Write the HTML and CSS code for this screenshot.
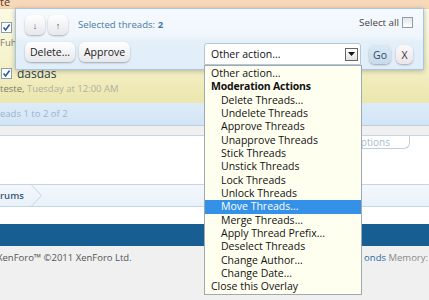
FILE: index.html
```html
<!DOCTYPE html>
<html lang="en">
<head>
    <meta charset="UTF-8">
    <meta name="viewport" content="width=device-width, initial-scale=1.0">
    <title>Inline Moderation</title>
    <link rel="stylesheet" href="styles.css">
</head>
<body>
    <div class="page">
        <div class="section-head">te</div>
        <div class="threads">
            <div class="thread">
                <div class="thread-title">
                    <span class="check checked"><svg width="11" height="11" viewBox="0 0 11 11"><path d="M2.5 5.5 L4.6 8 L8.6 2.6" fill="none" stroke="#2a5ca6" stroke-width="1.6"/></svg></span>
                    <span class="title">Teste</span>
                </div>
                <div class="thread-meta"><span class="author">Fuhrer,</span> Tuesday at 12:00 AM</div>
            </div>
            <div class="thread">
                <div class="thread-title">
                    <span class="check checked"><svg width="11" height="11" viewBox="0 0 11 11"><path d="M2.5 5.5 L4.6 8 L8.6 2.6" fill="none" stroke="#2a5ca6" stroke-width="1.6"/></svg></span>
                    <span class="title">dasdas</span>
                </div>
                <div class="thread-meta"><span class="author">teste,</span> Tuesday at 12:00 AM</div>
            </div>
        </div>
        <div class="page-nav">eads 1 to 2 of 2</div>
        <div class="options-area">
            <span class="options-tab">Options</span>
        </div>
        <div class="breadcrumb">
            <span class="crumb">rums</span>
            <svg class="chevron" width="12" height="21" viewBox="0 0 12 21"><polyline points="0.5,0 10.5,10.5 0.5,21" fill="none" stroke="#c3d5e4" stroke-width="1"/></svg>
        </div>
        <div class="footer-spacer"></div>
        <div class="footer-bar"></div>
        <div class="copyright">
            <span class="legal">XenForo&trade; &copy;2011 XenForo Ltd.</span>
            <span class="stats"><span class="link">onds</span> Memory:</span>
        </div>
    </div>

    <div class="modbar">
        <div class="modbar-row">
            <button class="btn arrow">&darr;</button>
            <button class="btn arrow">&uarr;</button>
            <span class="selected">Selected threads: <b>2</b></span>
            <span class="select-all">Select all <span class="check"></span></span>
        </div>
        <div class="modbar-row">
            <button class="btn">Delete...</button>
            <button class="btn">Approve</button>
            <div class="action-select">
                <span>Other action...</span>
                <span class="arrow-box"><svg width="7" height="4" viewBox="0 0 7 4"><polygon points="0,0 7,0 3.5,4" fill="#111"/></svg></span>
                <ul class="action-menu">
                    <li>Other action...</li>
                    <li class="group">Moderation Actions</li>
                    <li class="sub">Delete Threads...</li>
                    <li class="sub">Undelete Threads</li>
                    <li class="sub">Approve Threads</li>
                    <li class="sub">Unapprove Threads</li>
                    <li class="sub">Stick Threads</li>
                    <li class="sub">Unstick Threads</li>
                    <li class="sub">Lock Threads</li>
                    <li class="sub">Unlock Threads</li>
                    <li class="sub active">Move Threads...</li>
                    <li class="sub">Merge Threads...</li>
                    <li class="sub">Apply Thread Prefix...</li>
                    <li class="sub">Deselect Threads</li>
                    <li class="sub">Change Author...</li>
                    <li class="sub">Change Date...</li>
                    <li>Close this Overlay</li>
                </ul>
            </div>
            <button class="btn go">Go</button>
            <button class="btn close">X</button>
        </div>
    </div>
</body>
</html>
```

FILE: styles.css
```css
body {
    margin: 0;
    width: 429px;
    height: 300px;
    overflow: hidden;
    font-family: "Open Sans", "Noto Sans", sans-serif;
    background-color: #f0f0f0;
    position: relative;
}

.page {
    display: flex;
    flex-direction: column;
}

.section-head {
    height: 9px;
    background-color: #f7d9ba;
    color: #5a3a1c;
    font-size: 11px;
    line-height: 4px;
    overflow: hidden;
    border-bottom: 1px solid #eed2ae;
    box-sizing: border-box;
}

.threads {
    height: 94px;
    overflow: hidden;
    padding-top: 10px;
    box-sizing: border-box;
    background: linear-gradient(#fcfae4, #f6f3cf 50%, #ebe6ac);
}

.thread {
    height: 46px;
}

.thread-title {
    display: flex;
    align-items: center;
    gap: 5px;
    height: 17px;
    padding-left: 1px;
}

.title {
    font-size: 12px;
    color: #2d3d4c;
}

.thread-meta {
    font-size: 9.5px;
    line-height: 13px;
    color: #b0b0a0;
}

.thread-meta .author {
    color: #7a7a70;
}

.check {
    display: inline-block;
    width: 11px;
    height: 11px;
    box-sizing: border-box;
    border: 1px solid #8c9db0;
    background: linear-gradient(#e6e6e6, #ffffff);
    position: relative;
}

.check.checked {
    background: #ffffff;
}

.check svg {
    position: absolute;
    left: -1px;
    top: -1px;
}

.page-nav {
    height: 23px;
    box-sizing: border-box;
    background: linear-gradient(#dcebf9, #d3e5f5);
    border-bottom: 1px solid #b8cfe2;
    color: #98b5ce;
    font-size: 9.5px;
    line-height: 22px;
}

.options-area {
    margin-top: 9px;
    height: 50px;
    box-sizing: border-box;
    background-color: #ffffff;
    border-top: 1px solid #c3d6e6;
    border-bottom: 1px solid #c3d6e6;
    display: flex;
    justify-content: flex-end;
    align-items: flex-start;
    padding-right: 19px;
}

.options-tab {
    height: 12px;
    border: 1px solid #bcd0e0;
    border-top: none;
    border-radius: 0 0 6px 6px;
    padding: 0 19px 0 10px;
    color: #a9bdcd;
    font-size: 10px;
    line-height: 12px;
}

.breadcrumb {
    height: 22px;
    box-sizing: border-box;
    background: linear-gradient(#f4f8fc, #e9f1f9);
    border-bottom: 1px solid #c3d6e6;
    display: flex;
    align-items: center;
}

.crumb {
    font-size: 9.5px;
    font-weight: 600;
    color: #3b5875;
    padding-right: 7px;
}

.chevron {
    display: block;
}

.footer-spacer {
    height: 17px;
    background-color: #ffffff;
}

.footer-bar {
    height: 22px;
    background-color: #175f93;
}

.copyright {
    display: flex;
    justify-content: space-between;
    padding-top: 5px;
    font-size: 9.5px;
    line-height: 13px;
    color: #555555;
    white-space: nowrap;
}

.legal {
    margin-left: -3px;
}

.stats {
    color: #8a8a8a;
    margin-right: 1px;
}

.stats .link {
    color: #2b6aa0;
}

/* inline moderation overlay */
.modbar {
    position: absolute;
    left: 15px;
    top: 8px;
    width: 409px;
    height: 62px;
    box-sizing: border-box;
    padding: 6px 10px 0 9px;
    border: 1px solid #a8c6df;
    background: linear-gradient(#f6fafe, #eff6fc 46%, #e3eff9 54%, #e1edf8);
    box-shadow: 0 1px 5px rgba(0, 0, 0, 0.25);
    display: flex;
    flex-direction: column;
    gap: 7px;
}

.modbar-row {
    display: flex;
    align-items: flex-start;
    gap: 4px;
}

.btn {
    height: 20px;
    padding: 0 5px;
    font-family: "Open Sans", "Noto Sans", sans-serif;
    font-size: 10.5px;
    color: #222222;
    border: none;
    border-radius: 6px;
    background: linear-gradient(#ffffff, #e7e8ec);
    box-shadow: 0 1px 2px rgba(0, 0, 0, 0.3);
    cursor: pointer;
}

.btn.arrow {
    width: 20px;
    padding: 0;
    font-size: 9px;
    color: #555555;
}

.btn.arrow + .btn.arrow {
    margin-left: -1px;
}

.selected {
    margin-left: 6px;
    line-height: 20px;
    font-size: 9.6px;
    color: #4a7ba6;
}

.select-all {
    margin-left: auto;
    display: flex;
    align-items: center;
    gap: 3px;
    margin-top: 1px;
    font-size: 9.8px;
    color: #444444;
}

.action-select {
    margin-left: auto;
    margin-right: 2px;
    margin-top: 1px;
    position: relative;
    width: 157px;
    height: 22px;
    box-sizing: border-box;
    border: 1px solid #b7c6d3;
    border-radius: 3px 3px 0 0;
    background-color: #ffffff;
    display: flex;
    align-items: center;
    justify-content: space-between;
    padding: 0 2px 0 6px;
    font-size: 10.5px;
    color: #111111;
}

.arrow-box {
    width: 13px;
    height: 13px;
    box-sizing: border-box;
    border: 1px solid #666666;
    background: linear-gradient(#ffffff, #e2e2e2);
    display: flex;
    align-items: center;
    justify-content: center;
}

.action-menu {
    position: absolute;
    left: -1px;
    top: 21px;
    width: 158px;
    box-sizing: border-box;
    margin: 0;
    padding: 1px 0 0;
    list-style-type: none;
    background-color: #fffff0;
    border: 1px solid #9ea9b3;
    font-size: 10.5px;
    line-height: 13.33px;
    color: #111111;
}

.action-menu li {
    padding-left: 6px;
    white-space: nowrap;
}

.action-menu .group {
    font-weight: 700;
    letter-spacing: -0.2px;
}

.action-menu .sub {
    padding-left: 16px;
}

.action-menu .active {
    background-color: #3591e8;
    color: #ffffff;
}

.btn.go {
    width: 22px;
    height: 19px;
    padding: 0;
    margin-top: 3px;
    margin-left: 2px;
    background: linear-gradient(#dbe9f5, #c8dbec);
    color: #2c4b66;
}

.btn.close {
    width: 17px;
    height: 19px;
    padding: 0;
    margin-top: 3px;
    margin-left: 1px;
    background: linear-gradient(#fbf8fa, #ece6ea);
    color: #333333;
}
```
